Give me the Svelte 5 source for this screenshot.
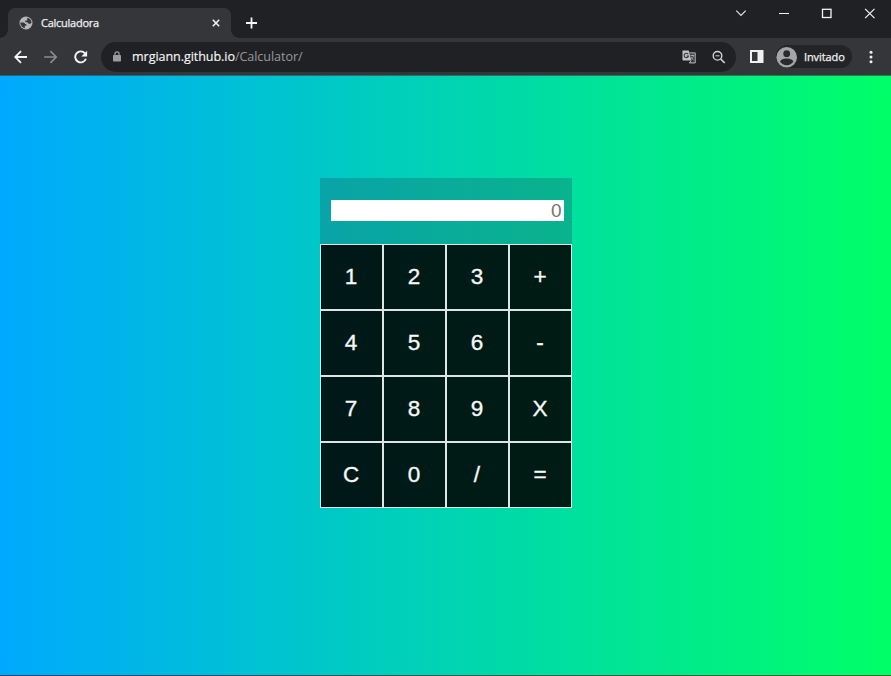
<script>
  const keys = ['1', '2', '3', '+', '4', '5', '6', '-', '7', '8', '9', 'X', 'C', '0', '/', '='];
</script>

<div class="window">
  <header class="tabs">
    <div class="tab">
      <svg class="globe" width="14" height="14" viewBox="0 0 14 14">
        <circle cx="7" cy="7" r="6.500" fill="#b4b6b9" />
        <path d="M1.300 6.500h3.200q1.500 0 1.500 1.500h1.300v1.800H5.800v2.500C3.300 11.600 1.300 9.400 1.300 6.500zM8.200 1.700c2.200.4 4 2.300 4.400 4.500q-.8 2-2.700 1.500-1.200-.3-1.300-1.400H6.300V4.500h1.900z" fill="#35363a" />
      </svg>
      <span class="title">Calculadora</span>
      <svg class="close" width="8" height="8" viewBox="0 0 8 8"><path d="M.8.8l6.400 6.400M7.200.8L.8 7.200" stroke="#f1f1f1" stroke-width="1.600" /></svg>
    </div>
    <svg class="plus" width="12" height="12" viewBox="0 0 12 12"><path d="M5.500 .5v11M0 6h11" stroke="#f4f4f4" stroke-width="1.800" /></svg>
    <div class="controls">
      <svg width="12" height="12" viewBox="0 0 12 12"><path d="M1.300 3.700L6 8.400l4.700-4.700" fill="none" stroke="#e4e4e4" stroke-width="1.200" /></svg>
      <svg width="12" height="12" viewBox="0 0 12 12"><path d="M1 6.500h10" stroke="#f4f4f4" /></svg>
      <svg width="12" height="12" viewBox="0 0 12 12"><rect x="1.500" y="2.300" width="8.500" height="8.200" fill="none" stroke="#f4f4f4" stroke-width="1.300" /></svg>
      <svg width="12" height="12" viewBox="0 0 12 12"><path d="M1.100 1.800l9.400 9.400M10.500 1.800L1.100 11.200" stroke="#f4f4f4" stroke-width="1.200" /></svg>
    </div>
  </header>

  <nav class="toolbar">
    <svg class="back" width="14" height="14" viewBox="0 0 14 14"><path d="M13 7H1.200M7 1.200L1.200 7 7 12.800" fill="none" stroke="#f5f5f5" stroke-width="1.800" /></svg>
    <svg class="forward" width="14" height="14" viewBox="0 0 14 14"><path d="M.2 7h12M6.400 1.200L12.200 7l-5.800 5.800" fill="none" stroke="#8b8c8f" stroke-width="1.700" /></svg>
    <svg class="reload" width="14" height="14" viewBox="0 0 14 14"><path d="M11 3.400A5.500 5.500 0 1 0 11.900 8.700" fill="none" stroke="#f5f5f5" stroke-width="1.900" /><path d="M13.100.7v5.800H7.300z" fill="#f5f5f5" /></svg>
    <div class="address">
      <svg class="lock" width="8" height="11" viewBox="0 0 8 11"><rect y="4" width="8" height="6.600" rx=".8" fill="#9a9b9f" /><path d="M1.900 4.500V3a2.100 2.100 0 0 1 4.200 0v1.500" fill="none" stroke="#9a9b9f" stroke-width="1.200" /></svg>
      <span class="url"><b>mrgiann.github.io</b>/Calculator/</span>
      <svg class="translate" width="14" height="14" viewBox="0 0 14 14">
        <path d="M.5.500h6.200l3.300 10H1.500q-1 0-1-1z" fill="#bfc1c4" />
        <path d="M7.500 2.900h5.700v10H7.300l2-2.200" fill="#303134" stroke="#bfc1c4" />
        <path d="M6.200 4.200A2.200 2.200 0 1 0 6.500 6H4.600" fill="none" stroke="#35363a" stroke-width="1.100" />
        <path d="M8.300 5.400h4M10.300 4.500v1M11.700 5.500q-.7 2.500-2.500 4M8.900 6.800q1 2 2.900 3.300" fill="none" stroke="#bfc1c4" stroke-width=".8" />
      </svg>
      <svg class="zoom" width="14" height="14" viewBox="0 0 14 14"><circle cx="5.500" cy="5.800" r="4.300" fill="none" stroke="#d2d3d5" stroke-width="1.400" /><path d="M8.700 9l4 4" stroke="#d2d3d5" stroke-width="1.700" /><path d="M3.500 5.800h4" stroke="#d2d3d5" /></svg>
    </div>
    <svg class="panel" width="14" height="13" viewBox="0 0 14 13"><path d="M0 0h13.500v13H0zM2 2v9h5.500V2z" fill="#f1f1f1" fill-rule="evenodd" /></svg>
    <div class="profile">
      <svg width="22" height="22" viewBox="0 0 22 22"><circle cx="10.700" cy="11.300" r="10.300" fill="#a3a5a9" /><circle cx="10.700" cy="7.700" r="3.400" fill="#292a2d" /><path d="M4 15.500c1-2.300 4.500-3 6.700-3s5.700.7 6.700 3a8 8 0 0 1-13.400 0z" fill="#292a2d" /></svg>
      <span>Invitado</span>
    </div>
    <svg class="menu" width="4" height="14" viewBox="0 0 4 14" fill="#eeeeee"><circle cx="2" cy="2.200" r="1.500" /><circle cx="2" cy="7" r="1.500" /><circle cx="2" cy="11.800" r="1.500" /></svg>
  </nav>

  <main>
    <section class="calculator">
      <div class="screen"><input type="text" placeholder="0" aria-label="Resultado" /></div>
      <div class="keys">
        {#each keys as key}
          <button>{key}</button>
        {/each}
      </div>
    </section>
  </main>
</div>

<style>
  :global(body) { margin: 0; overflow: hidden; }
  * { box-sizing: border-box; }
  svg { display: block; flex: none; }
  .window { width: 891px; height: 676px; display: flex; flex-direction: column; background: #202124; font-family: "Open Sans", "Noto Sans", sans-serif; }
  .tabs { height: 38px; flex: none; display: flex; align-items: flex-start; padding-left: 8px; }
  .tab { position: relative; width: 223px; height: 30px; margin-top: 8px; display: flex; align-items: center; background: #35363a; border-radius: 7px 7px 0 0; padding: 0 11px; }
  .tab::before, .tab::after { content: ""; position: absolute; bottom: 0; width: 8px; height: 8px; }
  .tab::before { left: -8px; background: radial-gradient(circle at 0 0, transparent 7.500px, #35363a 8px); }
  .tab::after { right: -8px; background: radial-gradient(circle at 100% 0, transparent 7.500px, #35363a 8px); }
  .title { margin-left: 8px; font-size: 11px; line-height: 14px; font-weight: 500; color: #f1f1f2; width: 58px; white-space: nowrap; letter-spacing: -0.250px; -webkit-text-stroke: .25px currentColor; }
  .close { margin-left: auto; }
  .plus { margin: 17px 0 0 15px; }
  .controls { display: flex; gap: 31px; margin: 7px 15px 0 auto; }
  .toolbar { height: 37px; flex: none; display: flex; align-items: center; background: #35363a; padding: 0 18px 0 14px; }
  .forward, .reload { margin-left: 16px; }
  .address { width: 635px; height: 30px; margin-left: 13px; display: flex; align-items: center; border-radius: 15px; background: #202124; padding: 0 10px 0 12px; }
  .url { margin-left: 11px; padding-top: 1px; font-size: 12.600px; line-height: 18px; color: #96989c; white-space: nowrap; letter-spacing: -0.080px; }
  .url b { font-weight: 500; color: #f5f5f5; -webkit-text-stroke: .15px currentColor; }
  .translate { margin-left: auto; }
  .zoom { margin-left: 16px; }
  .panel { margin-left: 14px; }
  .profile { display: flex; align-items: center; width: 76px; height: 23px; margin-left: 12px; border-radius: 12px; background: #232427; color: #f1f1f1; font-size: 11px; font-weight: 500; }
  .profile span { margin-left: 6px; line-height: 16px; white-space: nowrap; letter-spacing: -0.100px; -webkit-text-stroke: .25px currentColor; }
  .menu { margin-left: auto; }
  main { flex: 1; display: flex; align-items: flex-start; justify-content: center; background: linear-gradient(90deg, #00a9ff, #00ff67); border-top: 1px solid rgba(53, 54, 58, .6); border-bottom: 1px solid rgba(0, 0, 0, .6); }
  .calculator { width: 252px; margin-top: 102px; font-family: "Liberation Sans", Arial, sans-serif; }
  .screen { height: 66px; padding: 22px 8px 0 11px; background: rgba(24, 100, 112, .36); }
  input { display: block; width: 233px; height: 21px; border: 0; padding: 0 2px; margin: 0; border-radius: 0; background: #fff; text-align: right; font: 19px/21px "Liberation Sans", Arial, sans-serif; outline: none; }
  input::placeholder { color: #757575; opacity: 1; }
  .keys { display: grid; grid-template-columns: repeat(4, 1fr); grid-auto-rows: 66px; }
  button { border: 1px solid #dce6e4; border-radius: 0; padding: 0 0 1px; margin: 0; background: rgba(0, 0, 0, .88); background-clip: padding-box; color: #f5f8f7; font: 22.500px "Liberation Sans", Arial, sans-serif; -webkit-text-stroke: .35px currentColor; }
</style>
